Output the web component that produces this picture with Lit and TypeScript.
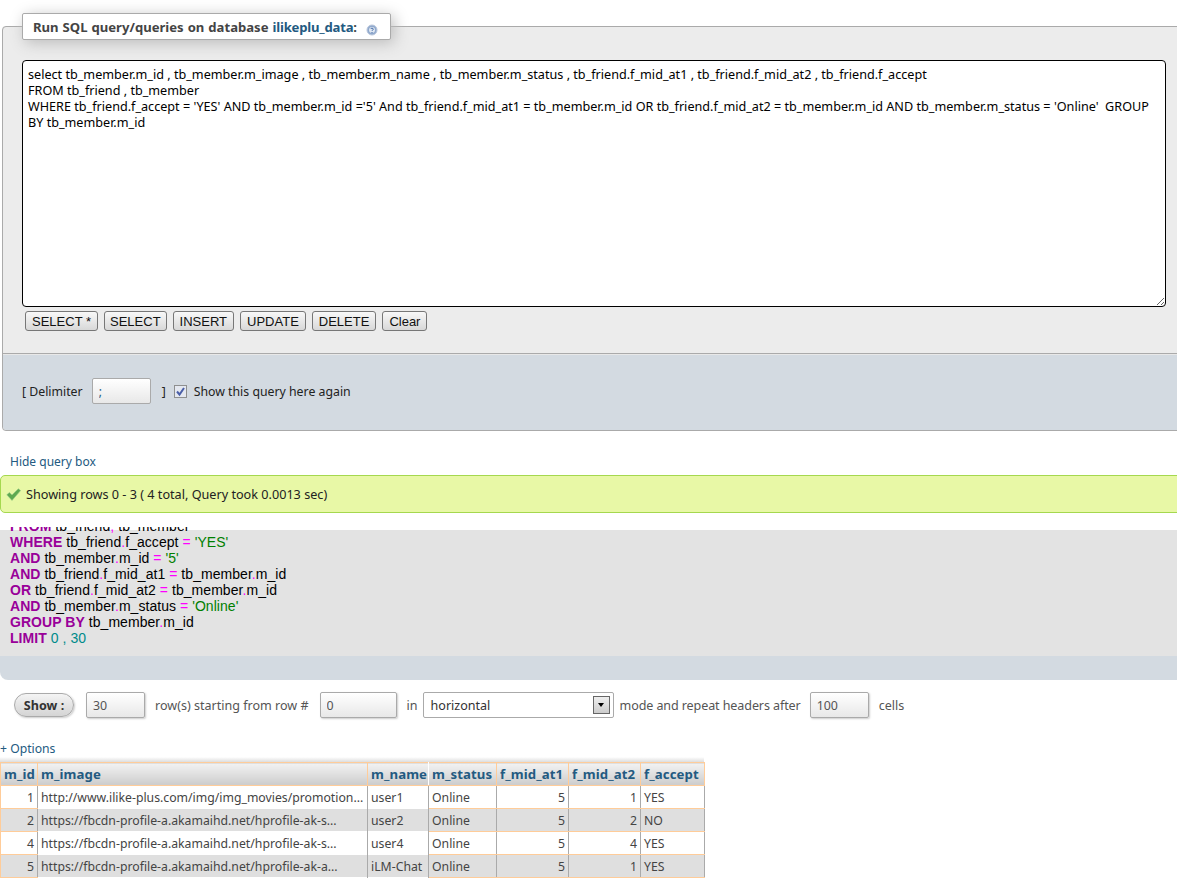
import {LitElement, html, css} from 'lit';
import {customElement} from 'lit/decorators.js';

const QUERY = `select tb_member.m_id , tb_member.m_image , tb_member.m_name , tb_member.m_status , tb_friend.f_mid_at1 , tb_friend.f_mid_at2 , tb_friend.f_accept
FROM tb_friend , tb_member
WHERE tb_friend.f_accept = 'YES' AND tb_member.m_id ='5' And tb_friend.f_mid_at1 = tb_member.m_id OR tb_friend.f_mid_at2 = tb_member.m_id AND tb_member.m_status = 'Online'  GROUP
BY tb_member.m_id`;

const ROWS = [
    ['1', 'http://www.ilike-plus.com/img/img_movies/promotion...', 'user1', 'Online', '5', '1', 'YES'],
    ['2', 'https://fbcdn-profile-a.akamaihd.net/hprofile-ak-s...', 'user2', 'Online', '5', '2', 'NO'],
    ['4', 'https://fbcdn-profile-a.akamaihd.net/hprofile-ak-s...', 'user4', 'Online', '5', '4', 'YES'],
    ['5', 'https://fbcdn-profile-a.akamaihd.net/hprofile-ak-a...', 'iLM-Chat', 'Online', '5', '1', 'YES'],
];

const HEADERS = ['m_id', 'm_image', 'm_name', 'm_status', 'f_mid_at1', 'f_mid_at2', 'f_accept'];

@customElement('app-root')
export class AppRoot extends LitElement {

    static override styles = css`
        :host {
            display: block;
            height: 894px;
            overflow: hidden;
            background: #fff;
            font-family: 'Noto Sans', 'DejaVu Sans', sans-serif;
            font-size: 12px;
            color: #444;
        }
        a { color: #235a81; text-decoration: none; }
        .page { width: 1177px; overflow: hidden; padding-top: 13px; }

        fieldset {
            margin: 0 -12px 0 2px;
            padding: 0;
            min-width: 0;
            border: 1px solid #aaa;
            border-radius: 4px;
            background: #ececec;
        }
        legend {
            margin-left: 19px;
            padding: 0 31px 0 10px;
            height: 25px;
            box-sizing: content-box;
            position: relative;
            line-height: 26px;
            width: 326px;
            font-weight: 700;
            font-size: 13.1px;
            word-spacing: .6px;
            white-space: nowrap;
            background: #fff;
            border: 1px solid #aaa;
            border-radius: 2px;
            box-shadow: 3px 3px 15px #bbb;
        }
        legend a { letter-spacing: -.2px; }
        legend svg { position: absolute; left: 343px; top: 10px; }
        .editor { padding: 20px 0 22px 19px; height: 271px; }
        textarea {
            display: block;
            box-sizing: border-box;
            width: 1144px;
            height: 247px;
            margin: 0;
            padding: 5px 5px;
            border: 1px solid #000;
            border-radius: 4px;
            background: #fff;
            color: #000;
            font: 12.63px/16px 'Noto Sans', 'DejaVu Sans', sans-serif;
            overflow: hidden;
            resize: both;
            outline: none;
            white-space: pre;
        }
        .buttons { display: flex; gap: 6px; margin: 4px 0 0 3px; }
        .buttons button {
            height: 20px;
            padding: 0 6px;
            border: 1px solid #777;
            border-radius: 3px;
            background: linear-gradient(#f8f8f8, #d8d8d8);
            color: #111;
            font: 13px 'Liberation Sans', sans-serif;
            white-space: nowrap;
        }
        .buttons button.tight { padding: 0 5px; }
        .foot {
            display: flex;
            align-items: center;
            box-sizing: border-box;
            height: 77px;
            padding: 0 0 2px 19px;
            border-top: 1px solid #aaa;
            border-bottom-left-radius: 4px;
            background: #d3dae1;
            box-shadow: inset 0 1px 0 #e8e8e8;
            color: #222;
            font-size: 12.3px;
        }
        .delim {
            box-sizing: border-box;
            width: 59px;
            height: 26px;
            margin: 0 11px 0 9px;
            padding: 0 6px;
            border: 1px solid #aaa;
            border-radius: 2px;
            background: linear-gradient(#fff, #e8e8e8);
            color: #235a81;
            font: 12px 'Noto Sans', sans-serif;
        }
        .check { display: block; margin: 0 7px 0 8px; }

        .hide { display: block; margin: 23px 0 0 10px; line-height: 16px; }
        .success {
            display: flex;
            align-items: center;
            gap: 5px;
            box-sizing: border-box;
            height: 38px;
            margin: 5px -12px 0 0;
            padding-left: 5px;
            border: 1px solid #a5d84f;
            border-radius: 5px;
            background: #e8f8a6;
            color: #222;
            font-size: 12.65px;
        }
        .sql-wrap {
            margin-top: 14px;
            border-bottom-left-radius: 8px;
            background: linear-gradient(#fff 3px, #d3dae1 3px);
            height: 153px;
            overflow: hidden;
        }
        .sql {
            height: 129px;
            overflow: hidden;
            background: linear-gradient(#fff 3px, #e3e3e3 3px);
        }
        .sql-lines {
            margin-top: -9px;
            padding-left: 10px;
            font: 14px/16px 'Liberation Sans', sans-serif;
            letter-spacing: .05px;
            color: #000;
        }
        .sql-lines b { color: #990099; }
        .op { color: #ff00ff; }
        .str { color: #008000; }
        .num { color: #008b8b; }

        .nav {
            display: flex;
            align-items: center;
            height: 26px;
            margin-top: 12px;
            padding-left: 14px;
            color: #555;
            font-size: 12.55px;
        }
        .show {
            box-sizing: border-box;
            width: 60px;
            height: 24px;
            margin-right: 12px;
            padding: 0;
            border: 1px solid #aaa;
            border-radius: 12px;
            background: linear-gradient(#f4f4f4, #d4d4d4);
            box-shadow: 1px 1px 2px #ccc;
            color: #333;
            font: 700 12.6px 'Noto Sans', sans-serif;
        }
        .nav input {
            box-sizing: border-box;
            height: 26px;
            padding: 0 6px;
            border: 1px solid #aaa;
            border-radius: 2px;
            background: linear-gradient(#fff, #e8e8e8);
            box-shadow: 1px 1px 2px #ccc;
            color: #555;
            font: 12.4px 'Noto Sans', sans-serif;
        }
        .w-rows { width: 59px; margin-right: 10px; }
        .w-start { width: 77px; margin: 0 10px 0 11px; }
        .w-rep { width: 59px; margin: 0 10px 0 9px; }
        .mode {
            display: flex;
            align-items: center;
            justify-content: space-between;
            box-sizing: border-box;
            width: 191px;
            height: 26px;
            margin: 0 6px 0 5px;
            padding: 0 3px 0 7px;
            border: 1px solid #aaa;
            border-radius: 2px;
            background: #fff;
            color: #333;
        }
        .after { letter-spacing: -.1px; }
        .arrow {
            display: flex;
            align-items: center;
            justify-content: center;
            box-sizing: border-box;
            width: 17px;
            height: 18px;
            border: 1px solid #666;
            background: linear-gradient(#eee, #ccc);
        }
        .arrow i {
            width: 0;
            height: 0;
            border: 3.5px solid transparent;
            border-top: 4px solid #000;
            border-bottom: 0;
        }

        .options { display: block; margin: 23px 0 0 0; line-height: 16px; font-size: 12.2px; }
        .shadow {
            width: 704px;
            height: 5px;
            background: linear-gradient(#fff, #ddd);
        }
        table {
            border-collapse: collapse;
            table-layout: fixed;
            width: 704px;
            font-size: 12.25px;
        }
        th, td {
            box-sizing: border-box;
            padding: 0 3px;
            white-space: nowrap;
            overflow: hidden;
        }
        th {
            height: 23px;
            border: 1px solid #ffcc99;
            background: linear-gradient(#f2f2f2, #cccccc);
            color: #235a81;
            font-weight: 700;
            font-size: 13.2px;
            letter-spacing: .1px;
            text-align: left;
        }
        th.plain { border-left-color: #fff; border-right-color: #fff; }
        td {
            height: 23px;
            border: 1px solid #ffcc99;
            border-left-color: #aaa;
            border-right-color: #aaa;
            color: #444;
        }
        tr.even td { background: #dfdfdf; }
        tr.odd td { background: #fff; }
        td.first { border-left-color: #ffcc99; }
        td.nobar { border-top-color: transparent; border-bottom-color: transparent; }
        td.right { text-align: right; }
        .c0 { width: 37px; }
        .c1 { width: 330px; }
        .c2 { width: 61px; }
        .c3 { width: 68px; }
        .c4 { width: 72px; }
        .c5 { width: 72px; }
        .c6 { width: 64px; }
    `;

    override render() {
        return html`
        <div class="page">
            <fieldset>
                <legend>Run SQL query/queries on database <a href="#">ilikeplu_data</a>:
                    <svg width="12" height="12" viewBox="0 0 12 12">
                        <circle cx="6" cy="6" r="5" fill="#8fa8cc" stroke="#b8c6dc"/>
                        <circle cx="6" cy="6" r="3" fill="#dfe7f2"/>
                        <path d="M4.7 4.9c.2-1 2.6-1 2.6.3 0 .8-1.3.8-1.3 1.6" fill="none" stroke="#3f67a5" stroke-width="1"/>
                        <path d="M6 8v1" stroke="#3f67a5"/>
                    </svg>
                </legend>
                <div class="editor">
                    <textarea spellcheck="false" .value=${QUERY}></textarea>
                    <div class="buttons">
                        <button>SELECT *</button>
                        <button class="tight">SELECT</button>
                        <button>INSERT</button>
                        <button>UPDATE</button>
                        <button>DELETE</button>
                        <button>Clear</button>
                    </div>
                </div>
                <div class="foot">
                    <span>[ Delimiter</span>
                    <input class="delim" value=";">
                    <span>]</span>
                    <svg class="check" width="13" height="13" viewBox="0 0 13 13">
                        <rect x=".5" y=".5" width="12" height="12" fill="#e4e8f0" stroke="#8e8f8f"/>
                        <path d="M3 6.5l2.5 3L10 3" fill="none" stroke="#4a5fa8" stroke-width="2"/>
                    </svg>
                    <span>Show this query here again</span>
                </div>
            </fieldset>

            <a class="hide" href="#">Hide query box</a>

            <div class="success">
                <svg width="15" height="13" viewBox="0 0 15 13">
                    <path d="M.8 6.8l2.6-2.2L6 7 12.3.8 14.6 2.6 6 12.4z" fill="#5fa950" stroke="#93c987" stroke-width=".6"/>
                </svg>
                <span>Showing rows 0 - 3 ( 4 total, Query took 0.0013 sec)</span>
            </div>

            <div class="sql-wrap">
                <div class="sql">
                    <div class="sql-lines">
                        <div><b>FROM</b> tb_friend<span class="op">,</span> tb_member</div>
                        <div><b>WHERE</b> tb_friend<span class="op">.</span>f_accept <span class="op">=</span> <span class="str">'YES'</span></div>
                        <div><b>AND</b> tb_member<span class="op">.</span>m_id <span class="op">=</span> <span class="str">'5'</span></div>
                        <div><b>AND</b> tb_friend<span class="op">.</span>f_mid_at1 <span class="op">=</span> tb_member<span class="op">.</span>m_id</div>
                        <div><b>OR</b> tb_friend<span class="op">.</span>f_mid_at2 <span class="op">=</span> tb_member<span class="op">.</span>m_id</div>
                        <div><b>AND</b> tb_member<span class="op">.</span>m_status <span class="op">=</span> <span class="str">'Online'</span></div>
                        <div><b>GROUP BY</b> tb_member<span class="op">.</span>m_id</div>
                        <div><b>LIMIT</b> <span class="num">0 , 30</span></div>
                    </div>
                </div>
            </div>

            <div class="nav">
                <button class="show">Show :</button>
                <input class="w-rows" value="30">
                <span>row(s) starting from row #</span>
                <input class="w-start" value="0">
                <span>in</span>
                <div class="mode"><span>horizontal</span><span class="arrow"><i></i></span></div>
                <span class="after">mode and repeat headers after</span>
                <input class="w-rep" value="100">
                <span>cells</span>
            </div>

            <a class="options" href="#">+ Options</a>
            <div class="shadow"></div>
            <table>
                <thead>
                    <tr>
                        ${HEADERS.map((h, i) => html`<th class="c${i} ${i === 2 ? 'plain' : ''}">${h}</th>`)}
                    </tr>
                </thead>
                <tbody>
                    ${ROWS.map((row, r) => html`
                        <tr class=${r % 2 ? 'even' : 'odd'}>
                            ${row.map((v, i) => html`<td class="${i === 0 ? 'first' : ''} ${i === 1 || i === 2 ? 'nobar' : ''} ${i === 0 || i === 4 || i === 5 ? 'right' : ''}">${v}</td>`)}
                        </tr>
                    `)}
                </tbody>
            </table>
        </div>
        `;
    }
}
